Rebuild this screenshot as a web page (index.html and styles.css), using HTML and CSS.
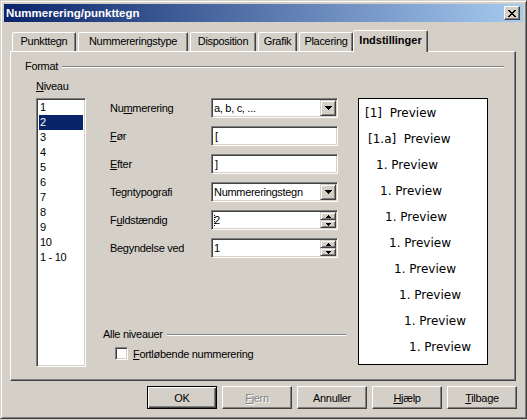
FILE: index.html
```html
<!DOCTYPE html>
<html lang="da">
<head>
<meta charset="utf-8">
<title>Nummerering/punkttegn</title>
<link rel="stylesheet" href="styles.css">
</head>
<body>
<div class="window">
  <div class="titlebar">
    <span class="title">Nummerering/punkttegn</span>
    <button class="close" aria-label="Luk">
      <svg width="8" height="7" viewBox="0 0 8 7" shape-rendering="crispEdges"><path d="M0 0h2v1H0zM6 0h2v1H6zM1 1h2v1H1zM5 1h2v1H5zM2 2h4v1H2zM3 3h2v1H3zM2 4h4v1H2zM1 5h2v1H1zM5 5h2v1H5zM0 6h2v1H0zM6 6h2v1H6z"/></svg>
    </button>
  </div>

  <div class="tabs">
    <div class="tab w-punkt">Punkttegn</div>
    <div class="tab w-type">Nummereringstype</div>
    <div class="tab w-disp">Disposition</div>
    <div class="tab w-graf">Grafik</div>
    <div class="tab w-plac">Placering</div>
    <div class="tab active w-indst">Indstillinger</div>
  </div>

  <div class="page">
    <div class="group-head"><span>Format</span><i class="rule"></i></div>

    <div class="format">
      <div class="levels">
        <div class="caption"><u>N</u>iveau</div>
        <ul class="listbox">
          <li>1</li>
          <li class="sel">2</li>
          <li>3</li>
          <li>4</li>
          <li>5</li>
          <li>6</li>
          <li>7</li>
          <li>8</li>
          <li>9</li>
          <li>10</li>
          <li>1 - 10</li>
        </ul>
      </div>

      <div class="fields">
        <div class="rows">
          <div class="row">
            <span class="lbl">Nu<u>m</u>merering</span>
            <div class="field combo">
              <span class="value">a, b, c, ...</span>
              <span class="drop"><svg width="7" height="4" viewBox="0 0 7 4" shape-rendering="crispEdges"><path d="M0 0h7v1H0zM1 1h5v1H1zM2 2h3v1H2zM3 3h1v1H3z"/></svg></span>
            </div>
          </div>
          <div class="row">
            <span class="lbl"><u>F</u>ør</span>
            <div class="field"><span class="value">[</span></div>
          </div>
          <div class="row">
            <span class="lbl"><u>E</u>fter</span>
            <div class="field"><span class="value">]</span></div>
          </div>
          <div class="row">
            <span class="lbl">Te<u>g</u>ntypografi</span>
            <div class="field combo">
              <span class="value">Nummereringstegn</span>
              <span class="drop"><svg width="7" height="4" viewBox="0 0 7 4" shape-rendering="crispEdges"><path d="M0 0h7v1H0zM1 1h5v1H1zM2 2h3v1H2zM3 3h1v1H3z"/></svg></span>
            </div>
          </div>
          <div class="row">
            <span class="lbl">F<u>u</u>ldstændig</span>
            <div class="field combo">
              <span class="value"><i class="caret"></i>2</span>
              <span class="spin">
                <span class="spin-btn"><svg width="5" height="3" viewBox="0 0 5 3" shape-rendering="crispEdges"><path d="M2 0h1v1H2zM1 1h3v1H1zM0 2h5v1H0z"/></svg></span>
                <span class="spin-btn"><svg width="5" height="3" viewBox="0 0 5 3" shape-rendering="crispEdges"><path d="M0 0h5v1H0zM1 1h3v1H1zM2 2h1v1H2z"/></svg></span>
              </span>
            </div>
          </div>
          <div class="row">
            <span class="lbl">Be<u>g</u>yndelse ved</span>
            <div class="field combo">
              <span class="value">1</span>
              <span class="spin">
                <span class="spin-btn"><svg width="5" height="3" viewBox="0 0 5 3" shape-rendering="crispEdges"><path d="M2 0h1v1H2zM1 1h3v1H1zM0 2h5v1H0z"/></svg></span>
                <span class="spin-btn"><svg width="5" height="3" viewBox="0 0 5 3" shape-rendering="crispEdges"><path d="M0 0h5v1H0zM1 1h3v1H1zM2 2h1v1H2z"/></svg></span>
              </span>
            </div>
          </div>
        </div>

        <div class="all-levels">
          <div class="group-head"><span>Alle niveauer</span><i class="rule"></i></div>
          <label class="check"><span class="box"></span><span><u>F</u>ortløbende nummerering</span></label>
        </div>
      </div>

      <div class="preview">
        <p class="lv1">[1]  Preview</p>
        <p class="lv2">[1.a]  Preview</p>
        <p class="lv3">1. Preview</p>
        <p class="lv4">1. Preview</p>
        <p class="lv5">1. Preview</p>
        <p class="lv6">1. Preview</p>
        <p class="lv7">1. Preview</p>
        <p class="lv8">1. Preview</p>
        <p class="lv9">1. Preview</p>
        <p class="lv10">1. Preview</p>
      </div>
    </div>
  </div>

  <div class="buttons">
    <button class="btn default">OK</button>
    <button class="btn disabled"><u>F</u>jern</button>
    <button class="btn">Annuller</button>
    <button class="btn"><u>H</u>jælp</button>
    <button class="btn"><u>T</u>ilbage</button>
  </div>
</div>
</body>
</html>
```

FILE: styles.css
```css
* { box-sizing: border-box; }

html, body {
  margin: 0;
  padding: 0;
  background: #d4d0c8;
}

body {
  font-family: "Liberation Sans", Arial, sans-serif;
  font-size: 11px;
  letter-spacing: -0.3px;
  color: #000;
}

u { text-decoration: underline; text-underline-offset: 1px; }

button {
  font: inherit;
  letter-spacing: inherit;
  color: inherit;
  margin: 0;
  padding: 0;
}

/* dialog frame */
.window {
  width: 527px;
  height: 419px;
  border: 1px solid;
  border-color: #d4d0c8 #404040 #404040 #d4d0c8;
  box-shadow: inset 1px 1px #fff, inset -1px -1px #808080;
  padding: 3px;
  display: flex;
  flex-direction: column;
  background: #d4d0c8;
}

.titlebar {
  height: 18px;
  background: linear-gradient(to right, #0a246a, #a6caf0);
  display: flex;
  align-items: center;
  justify-content: space-between;
  padding: 0 3px 0 2px;
  color: #fff;
}

.title {
  font-weight: bold;
  font-size: 11.5px;
  letter-spacing: 0;
}

.close {
  width: 16px;
  height: 14px;
  border: 1px solid;
  border-color: #fff #404040 #404040 #fff;
  box-shadow: inset -1px -1px #808080;
  background: #d4d0c8;
  display: flex;
  align-items: center;
  justify-content: center;
}

/* tab strip */
.tabs {
  display: flex;
  align-items: flex-end;
  height: 21px;
  margin: 8px 7px 0 6px;
  padding-left: 2px;
}

.tab {
  height: 19px;
  border: 1px solid;
  border-bottom: 0;
  border-color: #fff #404040 transparent #fff;
  box-shadow: inset -1px 0 #808080;
  border-radius: 2px 2px 0 0;
  margin-right: 2px;
  text-align: center;
  line-height: 17px;
  background: #d4d0c8;
}

.w-punkt { width: 64px; }
.w-type { width: 110px; }
.w-disp { width: 66px; }
.w-graf { width: 39px; }
.w-plac { width: 54px; }

.tab.active {
  width: 75px;
  height: 22px;
  margin: 0 0 -1px -2px;
  font-weight: bold;
  line-height: 19px;
  letter-spacing: 0;
  position: relative;
  z-index: 1;
}

/* tab page */
.page {
  height: 330px;
  margin: 0 7px 0 6px;
  border: 1px solid;
  border-color: #fff #404040 #404040 #fff;
  box-shadow: inset -1px -1px #808080;
  padding: 8px 11px 0 14px;
}

.group-head {
  display: flex;
  align-items: center;
  height: 13px;
  line-height: 13px;
}

.rule {
  flex: 1;
  height: 2px;
  border-top: 1px solid #808080;
  border-bottom: 1px solid #fff;
  margin-left: 4px;
}

.format {
  display: flex;
  margin: 7px 0 0 11px;
}

.caption {
  height: 13px;
  line-height: 13px;
}

.listbox {
  list-style: none;
  margin: 5px 0 0;
  width: 50px;
  height: 269px;
  padding: 1px;
  background: #fff;
  border: 1px solid;
  border-color: #808080 #fff #fff #808080;
  box-shadow: inset 1px 1px #404040, inset -1px -1px #d4d0c8;
}

.listbox li {
  height: 15px;
  line-height: 15px;
  padding-left: 1px;
  margin: 0 1px;
}

.listbox li:first-child { margin-top: 0; }

.listbox .sel {
  background: #0a246a;
  color: #fff;
}

/* middle column */
.fields {
  width: 243px;
  margin-left: 17px;
  padding-top: 18px;
  display: flex;
  flex-direction: column;
}

.rows {
  display: flex;
  flex-direction: column;
  gap: 8px;
  padding-left: 7px;
}

.row {
  display: flex;
  align-items: center;
  height: 20px;
}

.lbl { width: 101px; }

.field {
  width: 127px;
  height: 20px;
  background: #fff;
  border: 1px solid;
  border-color: #808080 #fff #fff #808080;
  box-shadow: inset 1px 1px #404040, inset -1px -1px #d4d0c8;
  padding: 1px;
  display: flex;
  align-items: center;
}

.value {
  flex: 1;
  padding-left: 2px;
  line-height: 16px;
  white-space: nowrap;
}

.combo .value { padding-left: 1px; }

.caret {
  display: inline-block;
  width: 1px;
  height: 11px;
  border-left: 1px dotted #000;
  margin-right: -1px;
  vertical-align: -2px;
}

.drop {
  width: 16px;
  height: 16px;
  background: #d4d0c8;
  border: 1px solid;
  border-color: #d4d0c8 #404040 #404040 #d4d0c8;
  box-shadow: inset 1px 1px #fff, inset -1px -1px #808080;
  display: flex;
  align-items: center;
  justify-content: center;
}

.spin {
  width: 16px;
  height: 16px;
  display: flex;
  flex-direction: column;
}

.spin-btn {
  flex: 1;
  background: #d4d0c8;
  border: 1px solid;
  border-color: #d4d0c8 #404040 #404040 #d4d0c8;
  box-shadow: inset 1px 1px #fff, inset -1px -1px #808080;
  display: flex;
  align-items: center;
  justify-content: center;
}

.all-levels {
  margin-top: auto;
  padding-bottom: 7px;
}

.check {
  display: flex;
  align-items: center;
  gap: 5px;
  margin: 6px 0 0 12px;
  height: 13px;
}

.box {
  width: 13px;
  height: 13px;
  background: #fff;
  border: 1px solid;
  border-color: #808080 #fff #fff #808080;
  box-shadow: inset 1px 1px #404040, inset -1px -1px #d4d0c8;
}

/* preview pane */
.preview {
  width: 130px;
  height: 267px;
  margin: 18px 0 0 12px;
  background: #fff;
  border: 1px solid #000;
  padding-top: 1px;
  font-family: "DejaVu Sans", sans-serif;
  font-size: 12px;
  letter-spacing: 0;
}

.preview p {
  margin: 0;
  height: 26px;
  line-height: 26px;
  white-space: pre;
}

.lv1 { padding-left: 6px; }
.lv2 { padding-left: 9px; }
.lv3 { padding-left: 17px; }
.lv4 { padding-left: 21px; }
.lv5 { padding-left: 26px; }
.lv6 { padding-left: 30px; }
.lv7 { padding-left: 35px; }
.lv8 { padding-left: 40px; }
.lv9 { padding-left: 45px; }
.lv10 { padding-left: 50px; }

/* button row */
.buttons {
  display: flex;
  justify-content: flex-end;
  gap: 5px;
  margin: 5px 6px 0 0;
}

.btn {
  width: 70px;
  height: 23px;
  background: #d4d0c8;
  border: 1px solid;
  border-color: #fff #404040 #404040 #fff;
  box-shadow: inset -1px -1px #808080;
  text-align: center;
}

.btn.default {
  border-color: #000;
  box-shadow: inset 1px 1px #fff, inset -1px -1px #404040, inset -2px -2px #808080;
}

.btn.disabled {
  color: #808080;
  text-shadow: 1px 1px #fff;
}
```
